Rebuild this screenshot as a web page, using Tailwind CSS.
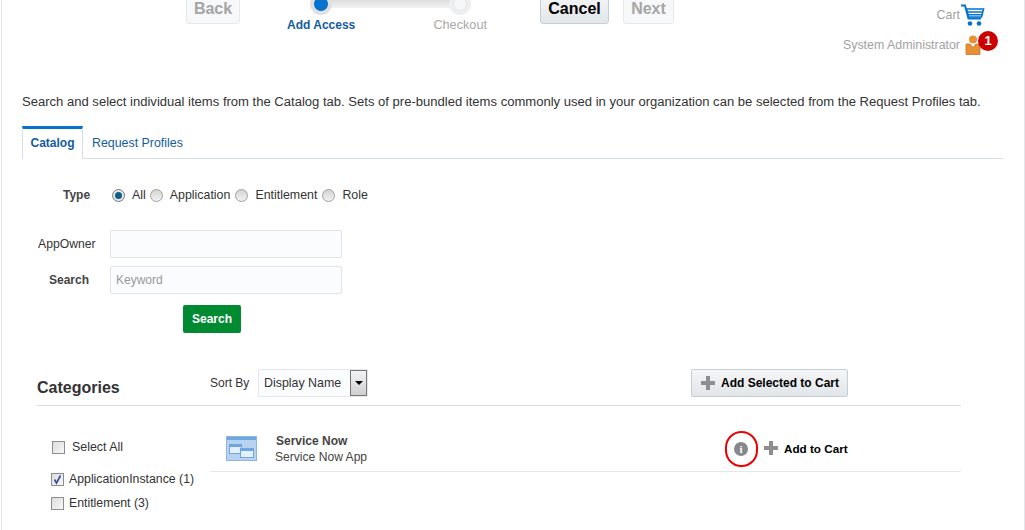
<!DOCTYPE html>
<html lang="en">
  <head>
    <meta charset="UTF-8" />
    <title>Add Access</title>
    <script src="https://cdn.jsdelivr.net/npm/@tailwindcss/browser@4"></script>
  </head>
  <body class="bg-white h-[530px] w-[1025px] overflow-hidden font-['Liberation_Sans',Arial,sans-serif] text-[12.4px] text-[#333]">
    <div class="relative h-[530px] ml-[1px] border-l border-r border-[#e2e6ea] pl-[20px]">
      <!-- train header -->
      <div class="flow-root h-[72px] -ml-[20px] relative">
        <div class="flex items-start pl-[184px] -mt-[6px]">
          <button class="w-[54px] h-[30px] rounded-[3px] border border-[#e6e8ea] bg-[#f7f8f9] font-bold text-[16px] text-[#a5a5a5]">Back</button>
          <div class="w-[200px] ml-[47px]">
            <div class="relative h-[23px] ml-[23px] w-[161px]">
              <div class="absolute left-[20px] right-[20px] top-[4px] h-[10px] bg-gradient-to-b from-[#d8d8d8] to-[#f2f2f2]"></div>
              <div class="absolute left-0 top-[-1px] w-[22px] h-[22px] rounded-full bg-[#e0e0e0] flex items-center justify-center"><div class="w-[14px] h-[14px] rounded-full bg-[#0572ce]"></div></div>
              <div class="absolute right-0 top-[-1px] w-[22px] h-[22px] rounded-full bg-[#eeeff1] flex items-center justify-center"><div class="w-[14px] h-[14px] rounded-full bg-[#f6f7f9] border border-[#e4e6ea]"></div></div>
            </div>
            <div class="flex justify-between -mt-[1px]">
              <span class="font-bold text-[12px] text-[#145c9e]">Add Access</span>
              <span class="text-[#a8a8a8] text-[12.7px]">Checkout</span>
            </div>
          </div>
          <button class="ml-[53px] w-[69px] h-[30px] rounded-[3px] border border-[#c4ced7] bg-gradient-to-b from-[#f4f5f6] to-[#e2e6e9] font-bold text-[16px] text-black">Cancel</button>
          <button class="ml-[14px] w-[51px] h-[30px] rounded-[3px] border border-[#e6e8ea] bg-[#f7f8f9] font-bold text-[16px] text-[#a5a5a5]">Next</button>
        </div>
        <div class="absolute right-[39px] top-[4px] flex items-center text-[#a2a2a2]">
          <span class="-mt-[1px]">Cart</span>
          <svg width="25" height="23" viewBox="0 0 25 23">
            <path d="M1 1.5h4l3.5 13h12.5" fill="none" stroke="#0572ce" stroke-width="2" />
            <path d="M6.5 5h17l-2 8h-13z" fill="none" stroke="#0572ce" stroke-width="1.6" />
            <path d="M7 8h16M8 10.8h14.5" stroke="#0572ce" stroke-width="1.6" />
            <circle cx="10" cy="19.5" r="2.3" fill="#0572ce" />
            <circle cx="19" cy="19.5" r="2.3" fill="#0572ce" />
          </svg>
        </div>
        <div class="absolute right-[26px] top-[31px] flex items-start text-[#a2a2a2]">
          <span class="mt-[5px]">System Administrator</span>
          <svg class="ml-[5px] mt-[4px]" width="16" height="20" viewBox="0 0 16 20">
            <circle cx="8" cy="4.5" r="4" fill="#e98f36" />
            <path d="M1 9h4l3 3.5 3-3.5h4v10.5H1z" fill="#e98f36" stroke="#c9761f" stroke-width="0.8" />
          </svg>
          <span class="ml-[-3px] w-[20px] h-[20px] rounded-full bg-[#c00] text-white font-bold text-[13px] flex items-center justify-center">1</span>
        </div>
      </div>

      <p class="mt-[23px] text-[13.05px] leading-[14px] whitespace-nowrap text-[#333]">Search and select individual items from the Catalog tab. Sets of pre-bundled items commonly used in your organization can be selected from the Request Profiles tab.</p>

      <!-- tabs -->
      <div class="mt-[17px] mr-[21px] flex h-[33px] border-b border-[#d6dfe6]">
        <div class="w-[61px] h-[33px] border-t-[3px] border-t-[#0572ce] border-x border-x-[#d6dfe6] bg-white text-center font-bold text-[12px] text-[#145c9e] leading-[29px]">Catalog</div>
        <div class="ml-[9px] text-[#145c9e] leading-[34px]">Request Profiles</div>
      </div>

      <!-- type radios -->
      <div class="mt-[28px] flex items-center h-[16px] pl-[41px]">
        <span class="w-[49px] font-bold text-[12px] text-[#444]">Type</span>
        <span class="w-[13px] h-[13px] rounded-full border border-[#7a7a7a] bg-[#e8e8e8] flex items-center justify-center"><span class="w-[7px] h-[7px] rounded-full bg-[#0b5f8a]"></span></span>
        <span class="ml-[7px]">All</span>
        <span class="ml-[4px] w-[13px] h-[13px] rounded-full border border-[#a0a0a0] bg-gradient-to-b from-[#d4d4d4] to-[#f2f2f2]"></span>
        <span class="ml-[7px]">Application</span>
        <span class="ml-[5px] w-[13px] h-[13px] rounded-full border border-[#a0a0a0] bg-gradient-to-b from-[#d4d4d4] to-[#f2f2f2]"></span>
        <span class="ml-[7px]">Entitlement</span>
        <span class="ml-[5px] w-[13px] h-[13px] rounded-full border border-[#a0a0a0] bg-gradient-to-b from-[#d4d4d4] to-[#f2f2f2]"></span>
        <span class="ml-[7px]">Role</span>
      </div>

      <!-- search form -->
      <div class="mt-[27px] flex items-center h-[28px]">
        <label class="w-[88px] pl-[16px] text-[12.2px] text-[#333]">AppOwner</label>
        <input class="w-[232px] h-[28px] rounded-[2px] border border-[#dfe4ea] bg-[#fbfcfe]" />
      </div>
      <div class="mt-[8px] flex items-center h-[28px]">
        <label class="w-[88px] pl-[27px] font-bold text-[12px] text-[#444]">Search</label>
        <input class="w-[232px] h-[28px] rounded-[2px] border border-[#dfe4ea] bg-[#fbfcfe] px-[5px] text-[12px] placeholder:text-[#999]" placeholder="Keyword" />
      </div>
      <button class="mt-[11px] ml-[161px] block w-[58px] h-[28px] rounded-[2px] bg-[#008a32] text-white font-bold text-[12px]">Search</button>

      <!-- categories -->
      <div class="mt-[33px] ml-[15px] mr-[63px]">
        <div class="flex items-center h-[40px] border-b border-[#d6dfe6] pb-[3px]">
          <h2 class="w-[173px] text-[16px] font-bold text-[#333] pt-[7px]">Categories</h2>
          <span class="w-[48px] -mt-[2px] text-[12px]">Sort By</span>
          <div class="-mt-[2px] flex items-center w-[110px] h-[28px] pl-[5px] rounded-[2px] border border-[#e4e8ee] bg-[#fbfcfe] relative">
            <span>Display Name</span>
            <span class="absolute right-0 top-0 w-[17px] h-[26px] border border-[#777] bg-gradient-to-b from-[#f4f4f4] to-[#cfcfcf] flex items-center justify-center">
              <span class="w-0 h-0 border-x-[4px] border-x-transparent border-t-[4px] border-t-black"></span>
            </span>
          </div>
          <button class="-mt-[2px] ml-[323px] flex items-center w-[157px] h-[28px] pl-[9px] rounded-[2px] border border-[#c4ced7] bg-gradient-to-b from-[#f4f5f6] to-[#e2e6e9] font-bold text-[12px] text-black">
            <svg class="mr-[6px]" width="14" height="14" viewBox="0 0 14 14"><path d="M5 0h4v5h5v4H9v5H5V9H0V5h5z" fill="#8c8e91" /></svg>
            Add Selected to Cart
          </button>
        </div>

        <div class="flex">
          <div class="w-[173px] shrink-0">
            <div class="mt-[34px] ml-[15px] flex items-center h-[14px]">
              <span class="w-[13px] h-[13px] border border-[#8e8e8e] bg-gradient-to-br from-[#dcdcdc] to-[#f8f8f8]"></span>
              <span class="ml-[7px]">Select All</span>
            </div>
            <div class="mt-[18px] ml-[14px] flex items-center h-[14px]">
              <span class="w-[13px] h-[13px] border border-[#8e8e8e] bg-gradient-to-br from-[#dcdcdc] to-[#f8f8f8] flex items-center justify-center">
                <svg width="11" height="11" viewBox="0 0 11 11"><path d="M2.5 5.5l2 3.5 4-7.5" fill="none" stroke="#3a4a9a" stroke-width="1.6" /></svg>
              </span>
              <span class="ml-[5px] text-[12.3px]">ApplicationInstance (1)</span>
            </div>
            <div class="mt-[10px] ml-[14px] flex items-center h-[14px]">
              <span class="w-[13px] h-[13px] border border-[#8e8e8e] bg-gradient-to-br from-[#dcdcdc] to-[#f8f8f8]"></span>
              <span class="ml-[5px] text-[12.3px]">Entitlement (3)</span>
            </div>
          </div>
          <div class="flex-1 mt-[19px]">
            <div class="relative flex items-center h-[47px] border-b border-[#e4e8ec] pt-[1px]">
              <svg class="ml-[16px]" width="31" height="25" viewBox="0 0 31 25">
                <rect x="0.5" y="0.5" width="30" height="24" fill="#b7d3f0" stroke="#8bb6e2" />
                <rect x="1" y="1" width="29" height="3" fill="#6ea6e0" />
                <rect x="3.5" y="8.5" width="12" height="9" fill="#e4f0fb" stroke="#6ea6e0" />
                <rect x="3.5" y="8.5" width="12" height="2.5" fill="#6ea6e0" />
                <rect x="14.5" y="12.5" width="13" height="9" fill="#e4f0fb" stroke="#6ea6e0" />
                <rect x="14.5" y="12.5" width="13" height="2.5" fill="#6ea6e0" />
              </svg>
              <div class="ml-[18px] leading-[16px]">
                <div class="ml-[1px] font-bold text-[12px] text-[#444]">Service Now</div>
                <div class="text-[12.1px] text-[#444]">Service Now App</div>
              </div>
              <div class="absolute left-[524px] top-[17px] w-[14px] h-[14px] rounded-full bg-[#85888c] text-white text-[11px] font-bold font-['Liberation_Serif',serif] flex items-center justify-center">i</div>
              <div class="absolute left-[515px] top-[6px] w-[33px] h-[36px] rounded-full border-2 border-[#ee0000]"></div>
              <svg class="absolute left-[554px] top-[16px]" width="14" height="14" viewBox="0 0 14 14"><path d="M5 0h4v5h5v4H9v5H5V9H0V5h5z" fill="#8c8e91" /></svg>
              <span class="absolute left-[574px] top-[15px] font-bold text-[11.7px] text-black">Add to Cart</span>
            </div>
          </div>
        </div>
      </div>
    </div>
  </body>
</html>
